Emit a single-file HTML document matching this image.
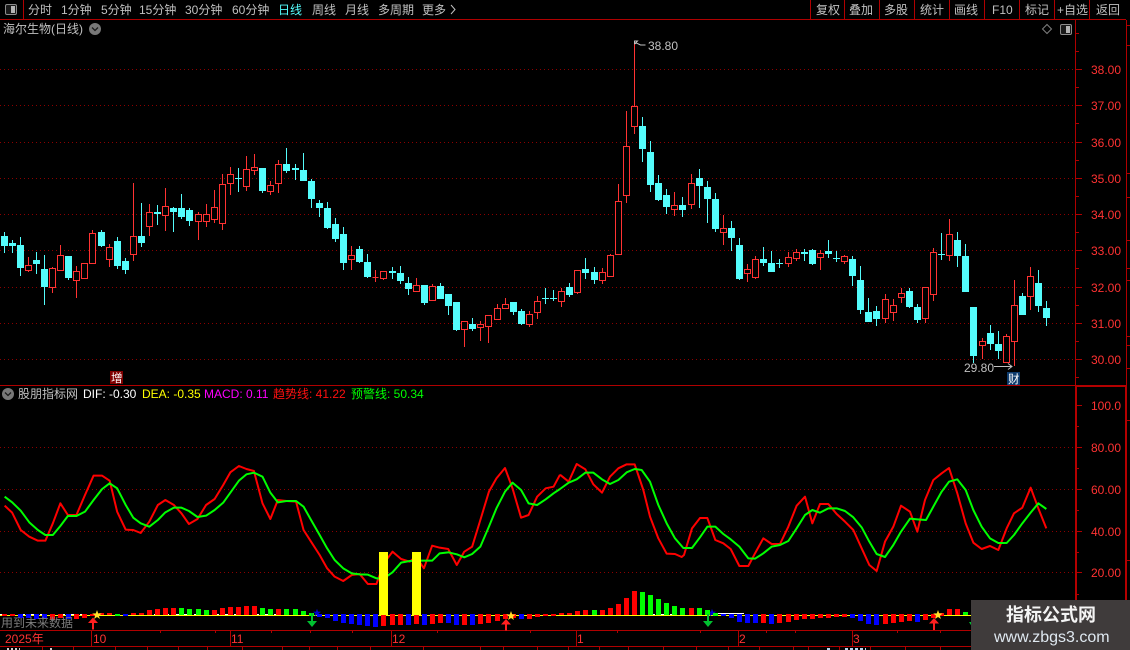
<!DOCTYPE html>
<html><head><meta charset="utf-8"><title>海尔生物</title>
<style>
html,body{margin:0;padding:0;background:#000;width:1130px;height:650px;overflow:hidden}
svg{display:block}
text{font-family:"Liberation Sans","WenQuanYi Zen Hei","Noto Sans CJK SC",sans-serif;font-size:12px}
.t text,.t{fill:#c0c0c0}
.a text{fill:#ff3232}
</style></head><body>
<svg width="1130" height="650" viewBox="0 0 1130 650" xmlns="http://www.w3.org/2000/svg">
<rect width="1130" height="650" fill="#000"/>
<!-- grid -->
<path d="M0 69.5H1075M0 105.5H1075M0 142.5H1075M0 178.5H1075M0 214.5H1075M0 250.5H1075M0 287.5H1075M0 323.5H1075M0 359.5H1075M0 447.5H1075M0 489.5H1075M0 531.5H1075M0 572.5H1075" stroke="#8c0000" stroke-width="1" stroke-dasharray="1 3" fill="none"/>
<!-- frame -->
<path d="M0 19.5H1126M23.5 0V19M810.5 0V19M844.5 0V19M879.5 0V19M914.5 0V19M949.5 0V19M984.5 0V19M1019.5 0V19M1054.5 0V19M1089.5 0V19M1075.5 20V386M1126.5 20V386M0 630.5H971M0 646.5H971" stroke="#b00000" stroke-width="1" fill="none"/>
<path d="M0 385.5H1075" stroke="#b00000" stroke-width="1"/>
<path d="M1075 386H1127M1076 386V630M1126 386V650" stroke="#b40000" stroke-width="2" fill="none"/>
<!-- axis ticks -->
<path d="M1076 69.5h6M1076 105.5h6M1076 142.5h6M1076 178.5h6M1076 214.5h6M1076 250.5h6M1076 287.5h6M1076 323.5h6M1076 359.5h6M1076 33.5h3M1076 51.5h3M1076 87.5h3M1076 123.5h3M1076 160.5h3M1076 196.5h3M1076 232.5h3M1076 268.5h3M1076 305.5h3M1076 341.5h3M1076 377.5h3M1077 405.5h5M1077 447.5h5M1077 489.5h5M1077 531.5h5M1077 572.5h5M1077 426.5h2M1077 468.5h2M1077 510.5h2M1077 552.5h2M1077 594.5h2M1127 25.5h3M1127 45.5h3M1127 173.5h3M1127 197.5h3M1127 240.5h3M1127 268.5h3M1127 280.5h3M1127 336.5h3M1127 345.5h3M1127 368.5h3M1127 420.5h3M1127 560.5h3" stroke="#b00000" stroke-width="1" fill="none"/>
<path d="M91.5 630V646M230.5 630V646M391.5 630V646M576.5 630V646M738.5 630V646M852.5 630V646M160.5 631v2M215.5 631v2M271.5 631v2M310.5 631v2M352.5 631v2M437.5 631v2M530.5 631v2M617.5 631v2M700.5 631v2M766.5 631v2M795.5 631v2M897.5 631v2M940.5 631v2M42.5 647v3M73.5 647v3M115.5 647v3M147.5 647v3M178.5 647v3M207.5 647v3M242.5 647v3M282.5 647v3M309.5 647v3M337.5 647v3M370.5 647v3M423.5 647v3M480.5 647v3M503.5 647v3M537.5 647v3M568.5 647v3M599.5 647v3M628.5 647v3M663.5 647v3M696.5 647v3M728.5 647v3M759.5 647v3M793.5 647v3M808.5 647v3M839.5 647v3M870.5 647v3M905.5 647v3M940.5 647v3" stroke="#b00000" stroke-width="1" fill="none"/>
<!-- cyan candles -->
<path d="M4.5 232V253M12.5 240V253M20.5 237V276M36.5 252V274M44.5 255V305M68.5 256V280M101.5 230V247M117.5 237V269M125.5 258V274M141.5 203V247M157.5 205V225M173.5 207V232M181.5 194V219M189.5 208V226M238.5 168V192M262.5 168V193M286.5 148V173M295.5 164V180M303.5 153V181M311.5 179V208M319.5 200V217M327.5 202V229M335.5 218V242M343.5 227V270M359.5 246V263M367.5 254V278M392.5 267V279M400.5 266V284M408.5 277V295M424.5 285V305M440.5 283V299M448.5 294V315M456.5 302V331M472.5 318V331M513.5 302V315M521.5 309V325M545.5 288V304M553.5 290V301M569.5 283V297M585.5 258V279M594.5 267V284M642.5 117V162M650.5 141V192M658.5 175V201M666.5 189V214M682.5 197V217M699.5 169V208M707.5 181V223M715.5 193V232M731.5 221V251M739.5 238V280M763.5 247V266M771.5 251V272M779.5 259V268M804.5 249V261M812.5 249V265M828.5 240V258M836.5 251V262M852.5 256V286M860.5 266V314M868.5 298V322M876.5 306V326M909.5 288V308M917.5 304V323M941.5 233V260M957.5 232V267M965.5 244V292M973.5 307V363M990.5 325V350M998.5 331V359M1022.5 293V315M1038.5 270V312M1046.5 301V326" stroke="#54fcfc" stroke-width="1" fill="none"/>
<path d="M1 236h7V246h-7zM9 243h7V246h-7zM17 245h7V268h-7zM33 260h7V264h-7zM41 269h7V287h-7zM65 256h7V278h-7zM98 232h7V246h-7zM114 241h7V266h-7zM122 261h7V270h-7zM138 236h7V243h-7zM154 212h7V214h-7zM170 208h7V212h-7zM178 208h7V217h-7zM186 210h7V221h-7zM235 178h7V179h-7zM259 168h7V191h-7zM283 164h7V171h-7zM292 168h7V170h-7zM300 170h7V181h-7zM308 181h7V199h-7zM316 203h7V208h-7zM324 208h7V228h-7zM332 224h7V239h-7zM340 234h7V263h-7zM356 249h7V262h-7zM364 262h7V277h-7zM389 271h7V273h-7zM397 273h7V281h-7zM405 283h7V289h-7zM421 285h7V303h-7zM437 286h7V299h-7zM445 294h7V306h-7zM453 302h7V330h-7zM469 324h7V329h-7zM510 302h7V312h-7zM518 311h7V324h-7zM542 298h7V299h-7zM550 298h7V299h-7zM566 287h7V295h-7zM582 269h7V273h-7zM591 272h7V280h-7zM639 126h7V149h-7zM647 152h7V185h-7zM655 183h7V200h-7zM663 195h7V207h-7zM679 205h7V210h-7zM696 178h7V186h-7zM704 187h7V199h-7zM712 199h7V229h-7zM728 228h7V238h-7zM736 245h7V279h-7zM760 259h7V263h-7zM768 263h7V272h-7zM776 263h7V264h-7zM801 252h7V254h-7zM809 250h7V264h-7zM825 251h7V254h-7zM833 258h7V259h-7zM849 259h7V276h-7zM857 280h7V310h-7zM865 312h7V322h-7zM873 311h7V319h-7zM906 291h7V307h-7zM914 307h7V320h-7zM938 254h7V255h-7zM954 240h7V256h-7zM962 256h7V292h-7zM970 307h7V356h-7zM987 333h7V344h-7zM995 344h7V351h-7zM1019 296h7V315h-7zM1035 283h7V306h-7zM1043 308h7V318h-7z" fill="#54fcfc"/>
<!-- red candles -->
<path d="M28.5 257V272M52.5 267V293M60.5 245V271M76.5 266V298M84.5 263V279M92.5 230V264M109.5 244V267M133.5 183V261M149.5 204V236M165.5 188V231M198.5 212V240M206.5 204V227M214.5 190V223M222.5 174V230M230.5 167V195M246.5 156V191M254.5 154V175M270.5 181V195M278.5 160V193M351.5 246V270M375.5 270V282M383.5 271V280M416.5 278V292M432.5 284V301M464.5 321V347M480.5 321V341M488.5 315V343M497.5 304V320M505.5 298V309M529.5 311V327M537.5 296V319M561.5 288V307M577.5 270V294M602.5 268V284M610.5 254V277M618.5 184V255M626.5 111V203M634.5 43V134M674.5 192V216M691.5 174V209M723.5 215V245M747.5 264V282M755.5 256V279M788.5 252V267M796.5 249V261M820.5 250V270M844.5 255V264M885.5 294V323M893.5 299V321M901.5 288V303M925.5 287V323M933.5 248V301M949.5 219V261M982.5 338V359M1006.5 334V363M1014.5 280V366M1030.5 267V310" stroke="#ff3232" stroke-width="1" fill="none"/>
<path d="M25.5 265.5h6V270.5h-6zM49.5 268.5h6V287.5h-6zM57.5 255.5h6V270.5h-6zM73.5 271.5h6V280.5h-6zM81.5 263.5h6V278.5h-6zM89.5 233.5h6V263.5h-6zM106.5 247.5h6V259.5h-6zM130.5 236.5h6V254.5h-6zM146.5 212.5h6V226.5h-6zM162.5 206.5h6V215.5h-6zM195.5 214.5h6V221.5h-6zM203.5 214.5h6V221.5h-6zM211.5 207.5h6V219.5h-6zM219.5 184.5h6V223.5h-6zM227.5 174.5h6V183.5h-6zM243.5 169.5h6V186.5h-6zM251.5 167.5h6V170.5h-6zM267.5 185.5h6V191.5h-6zM275.5 164.5h6V183.5h-6zM348.5 255.5h6V259.5h-6zM372.5 277.5h6V277.5h-6zM380.5 271.5h6V278.5h-6zM413.5 285.5h6V291.5h-6zM429.5 286.5h6V300.5h-6zM461.5 321.5h6V329.5h-6zM477.5 324.5h6V327.5h-6zM485.5 315.5h6V326.5h-6zM494.5 308.5h6V319.5h-6zM502.5 304.5h6V308.5h-6zM526.5 314.5h6V324.5h-6zM534.5 301.5h6V312.5h-6zM558.5 291.5h6V301.5h-6zM574.5 270.5h6V292.5h-6zM599.5 272.5h6V280.5h-6zM607.5 255.5h6V276.5h-6zM615.5 201.5h6V254.5h-6zM623.5 146.5h6V195.5h-6zM631.5 106.5h6V126.5h-6zM671.5 205.5h6V209.5h-6zM688.5 183.5h6V204.5h-6zM720.5 228.5h6V232.5h-6zM744.5 269.5h6V273.5h-6zM752.5 259.5h6V277.5h-6zM785.5 257.5h6V263.5h-6zM793.5 252.5h6V258.5h-6zM817.5 253.5h6V257.5h-6zM841.5 256.5h6V261.5h-6zM882.5 299.5h6V318.5h-6zM890.5 305.5h6V312.5h-6zM898.5 293.5h6V297.5h-6zM922.5 287.5h6V318.5h-6zM930.5 252.5h6V294.5h-6zM946.5 234.5h6V255.5h-6zM979.5 341.5h6V345.5h-6zM1003.5 336.5h6V362.5h-6zM1011.5 305.5h6V341.5h-6zM1027.5 276.5h6V296.5h-6z" fill="#000" stroke="#ff3232" stroke-width="1"/>
<!-- high/low markers -->
<path d="M634.5 44V41h3l-3 3 2-1 4 2 5 0" stroke="#c0c0c0" fill="none" stroke-width="1"/>
<text x="648" y="50" fill="#c0c0c0">38.80</text>
<path d="M994 366.5h18M1008 363.5l4 3-4 3" stroke="#c0c0c0" fill="none" stroke-width="1"/>
<text x="964" y="372" fill="#c0c0c0">29.80</text>
<rect x="110" y="371" width="13" height="13" fill="#800000"/><text x="111" y="382" fill="#fff" style="font-size:11.5px">增</text>
<rect x="1007" y="372" width="13" height="13" fill="#0c3a6c"/><text x="1008" y="383" fill="#fff" style="font-size:11.5px">财</text>
<!-- indicator lines -->
<g fill="none" stroke-width="2" stroke-linejoin="round">
<polyline vector-effect="non-scaling-stroke" stroke="#ff0000" transform="translate(0 440) scale(.35714 .33333)" points="13,197 34,218 58,270 82,290 106,302 127,302 148,250 169,190 190,225 214,225 238,165 262,107 286,107 307,122 328,215 352,269 373,270 394,279 418,245 442,195 463,180 487,195 508,220 529,252 553,237 577,195 601,177 625,135 645,97 669,78 690,87 711,93 735,190 757,237 778,180 802,183 829,185 850,270 871,305 895,345 916,385 937,410 961,423 985,405 1007,402 1030,432 1054,432 1075,370 1099,335 1123,357 1147,365 1165,350 1187,385 1210,317 1231,323 1255,327 1279,375 1300,335 1322,320 1345,240 1369,155 1390,115 1414,84 1435,145 1459,233 1480,225 1504,170 1528,145 1550,140 1568,104"/>
<polyline vector-effect="non-scaling-stroke" stroke="#ff0000" transform="translate(560 440) scale(.33333)" points="0,104 26,125 50,72 76,88 100,133 126,158 150,110 175,85 200,73 224,73 250,150 270,230 295,295 320,341 345,342 365,351 372,345 396,265 420,234 442,234 466,300 490,310 512,327 538,378 565,378 585,340 610,295 635,312 660,312 685,260 710,197 735,170 757,250 780,192 805,192 830,222 855,245 880,270 905,325 928,375 950,393 975,305 1000,260 1023,197 1050,215 1072,275 1095,180 1120,120 1145,100 1167,84 1192,160 1217,250 1240,308 1265,327 1290,318 1315,330 1340,265 1362,220 1387,203 1412,143 1435,205 1459,265"/>
<polyline vector-effect="non-scaling-stroke" stroke="#00ff00" transform="translate(0 440) scale(.35714 .33333)" points="13,170 34,187 58,212 82,247 106,270 127,285 148,285 169,258 190,228 214,228 238,215 262,180 286,147 307,130 328,145 352,195 373,233 394,250 418,260 442,240 463,217 487,203 508,203 529,213 553,231 577,227 601,210 625,188 645,158 669,122 690,103 711,98 735,110 757,158 778,187 802,183 829,183 850,200 871,240 895,285 916,325 937,360 961,385 985,400 1007,403 1030,404 1054,415 1075,415 1099,397 1123,368 1147,363 1165,362 1187,362 1210,362 1231,340 1255,337 1279,343 1300,352 1322,342 1345,320 1369,260 1390,205 1414,155 1435,128 1459,150 1480,190 1504,195 1528,178 1550,160 1568,147"/>
<polyline vector-effect="non-scaling-stroke" stroke="#00ff00" transform="translate(560 440) scale(.33333)" points="0,147 26,128 50,118 76,98 100,98 126,118 150,132 175,120 200,97 224,87 245,90 270,125 295,195 320,250 345,295 370,324 396,324 420,292 442,260 466,260 490,282 512,298 538,320 565,355 585,356 610,340 635,320 660,315 685,303 710,265 735,225 757,210 780,218 805,205 830,205 855,213 880,232 905,262 928,305 950,342 975,351 1000,315 1023,275 1050,236 1072,238 1098,240 1120,200 1145,155 1167,125 1192,118 1217,150 1240,210 1265,260 1290,295 1315,309 1340,309 1362,285 1387,250 1412,218 1435,190 1459,207"/>
</g>
<!-- zero line -->
<path d="M0 615.5H971" stroke="#ffff00" stroke-width="1"/>
<path d="M0 614.5H90M154 614.5H290M650 614.5H680" stroke="#fff" stroke-width="1" stroke-dasharray="5 5"/>
<path d="M713 613.5H744" stroke="#fff" stroke-width="1"/>
<!-- blue outline stars -->
<polygon transform="translate(317 613) scale(.85)" points="0,-5 1.2,-1.6 4.8,-1.5 1.9,.6 2.9,4 0,2 -2.9,4 -1.9,.6 -4.8,-1.5 -1.2,-1.6" fill="#0000d0"/>
<polygon transform="translate(712 613) scale(.85)" points="0,-5 1.2,-1.6 4.8,-1.5 1.9,.6 2.9,4 0,2 -2.9,4 -1.9,.6 -4.8,-1.5 -1.2,-1.6" fill="#0000d0"/>
<!-- MACD bars -->
<path fill="#ff0000" d="M2 614h5v2h-5zM10 614h5v2h-5zM50 614h5v6h-5zM58 614h5v4h-5zM74 614h5v5h-5zM82 614h5v4h-5zM90 614h5v2h-5zM99 613h5v2h-5zM107 613h5v2h-5zM131 613h5v2h-5zM139 613h5v2h-5zM147 610h5v5h-5zM155 609h5v6h-5zM163 608h5v7h-5zM171 608h5v7h-5zM212 610h5v5h-5zM220 608h5v7h-5zM228 607h5v8h-5zM236 607h5v8h-5zM244 606h5v9h-5zM252 606h5v9h-5zM276 609h5v6h-5zM381 615h5v11h-5zM390 614h5v11h-5zM398 614h5v11h-5zM414 615h5v9h-5zM430 614h5v10h-5zM438 614h5v9h-5zM462 614h5v11h-5zM478 614h5v10h-5zM486 614h5v9h-5zM495 614h5v7h-5zM503 614h5v5h-5zM511 614h5v4h-5zM527 614h5v5h-5zM535 614h5v3h-5zM543 614h5v2h-5zM551 614h5v2h-5zM559 613h5v2h-5zM567 613h5v2h-5zM575 611h5v4h-5zM583 610h5v5h-5zM600 610h5v5h-5zM608 608h5v7h-5zM616 604h5v11h-5zM624 598h5v17h-5zM632 591h5v24h-5zM689 608h5v7h-5zM761 614h5v9h-5zM777 614h5v9h-5zM786 614h5v8h-5zM794 614h5v6h-5zM802 614h5v5h-5zM810 614h5v5h-5zM818 614h5v4h-5zM826 614h5v4h-5zM834 614h5v3h-5zM842 614h5v3h-5zM883 614h5v10h-5zM891 614h5v9h-5zM899 614h5v8h-5zM907 614h5v7h-5zM923 614h5v6h-5zM931 614h5v4h-5zM939 613h5v3h-5zM947 609h5v6h-5zM955 609h5v6h-5z"/>
<path fill="#0000ff" d="M18 614h5v4h-5zM26 614h5v4h-5zM34 614h5v5h-5zM42 614h5v5h-5zM66 614h5v5h-5zM123 614h5v2h-5zM317 614h5v3h-5zM325 614h5v4h-5zM333 614h5v7h-5zM341 614h5v9h-5zM349 614h5v10h-5zM357 614h5v11h-5zM365 614h5v12h-5zM373 614h5v13h-5zM406 614h5v11h-5zM422 614h5v11h-5zM446 614h5v9h-5zM454 614h5v11h-5zM470 614h5v11h-5zM519 614h5v5h-5zM721 614h5v2h-5zM729 614h5v4h-5zM737 614h5v8h-5zM745 614h5v9h-5zM753 614h5v9h-5zM769 614h5v10h-5zM850 614h5v4h-5zM858 614h5v7h-5zM866 614h5v10h-5zM874 614h5v11h-5zM915 614h5v8h-5z"/>
<path fill="#00ff00" d="M115 614h5v2h-5zM179 608h5v7h-5zM187 609h5v6h-5zM196 609h5v6h-5zM204 610h5v5h-5zM260 608h5v7h-5zM268 609h5v6h-5zM284 609h5v6h-5zM293 609h5v6h-5zM301 611h5v4h-5zM309 613h5v3h-5zM592 610h5v5h-5zM640 592h5v23h-5zM648 595h5v20h-5zM656 599h5v16h-5zM664 603h5v12h-5zM672 606h5v9h-5zM680 608h5v7h-5zM697 608h5v7h-5zM705 610h5v5h-5zM713 613h5v3h-5zM963 612h5v3h-5z"/>
<!-- yellow bars -->
<rect x="379" y="552" width="9" height="63" fill="#ffff00"/>
<rect x="412" y="552" width="9" height="63" fill="#ffff00"/>
<!-- arrows and stars -->
<path fill="#ff2020" d="M93 617.5l5 5.5h-4v6.5h-2V623h-4zM506 619l5 5.5h-4v6h-2v-6h-4zM934 618l5 5.5h-4v6.5h-2v-6.5h-4z"/>
<path fill="#00c030" d="M311 613h2v8h4l-5 6-5-6h4zM707 614h2v7h4l-5 6-5-6h4zM969 622h5l-2.500 4z"/>
<g fill="#ffe028"><polygon transform="translate(97 615)" points="0,-5 1.2,-1.6 4.8,-1.5 1.9,.6 2.900,4 0,2 -2.900,4 -1.900,.6 -4.800,-1.500 -1.200,-1.600"/><polygon transform="translate(511 616)" points="0,-5 1.2,-1.6 4.8,-1.5 1.9,.6 2.900,4 0,2 -2.900,4 -1.900,.6 -4.800,-1.500 -1.200,-1.600"/><polygon transform="translate(938 615)" points="0,-5 1.2,-1.6 4.8,-1.5 1.9,.6 2.900,4 0,2 -2.900,4 -1.900,.6 -4.800,-1.500 -1.200,-1.600"/></g>
<!-- toolbar icons -->
<rect x="5.500" y="4.500" width="11" height="10" rx="1.500" fill="#1a1a1a" stroke="#8c8c8c"/><rect x="11" y="6" width="4" height="7" fill="#b4b4b4"/>
<path d="M1047 24.500l4.500 4.500-4.500 4.500-4.500-4.500z" fill="none" stroke="#808080"/>
<rect x="1060.500" y="24.500" width="11" height="10" rx="1.500" fill="#1a1a1a" stroke="#8c8c8c"/><rect x="1066" y="26" width="4" height="7" fill="#b4b4b4"/>
<circle cx="95" cy="29" r="6" fill="#787878"/><path d="M92 27.500l3 3 3-3" stroke="#1c1c1c" stroke-width="1.300" fill="none"/>
<circle cx="8" cy="394" r="6" fill="#787878"/><path d="M5 392.500l3 3 3-3" stroke="#1c1c1c" stroke-width="1.300" fill="none"/>
<!-- toolbar text -->
<g class="t">
<text x="28" y="14">分时</text><text x="61" y="14">1分钟</text><text x="101" y="14">5分钟</text><text x="139" y="14">15分钟</text><text x="185" y="14">30分钟</text><text x="232" y="14">60分钟</text>
<text x="278" y="14" style="fill:#54fcfc">日线</text>
<text x="312" y="14">周线</text><text x="345" y="14">月线</text><text x="378" y="14">多周期</text><text x="422" y="14">更多</text>
<path d="M451 5l4 4.500-4 4.500" fill="none" stroke="#c0c0c0"/>
<text x="816" y="14">复权</text><text x="849" y="14">叠加</text><text x="884" y="14">多股</text><text x="920" y="14">统计</text><text x="954" y="14">画线</text><text x="992" y="14">F10</text><text x="1025" y="14">标记</text><text x="1057" y="14">+自选</text><text x="1096" y="14">返回</text>
<text x="3" y="33">海尔生物(日线)</text>
<text x="18" y="398">股朋指标网</text>
</g>
<text x="83" y="398" fill="#fff">DIF: -0.30</text>
<text x="142" y="398" fill="#ffff00">DEA: -0.35</text>
<text x="204" y="398" fill="#ff00ff">MACD: 0.11</text>
<text x="273" y="398" fill="#ff1010">趋势线: 41.22</text>
<text x="351" y="398" fill="#00ff00">预警线: 50.34</text>
<text x="1" y="627" fill="#7c7c7c">用到未来数据</text>
<!-- axis text -->
<g class="a">
<text x="1091" y="74">38.00</text><text x="1091" y="110">37.00</text><text x="1091" y="147">36.00</text><text x="1091" y="183">35.00</text><text x="1091" y="219">34.00</text><text x="1091" y="255">33.00</text><text x="1091" y="292">32.00</text><text x="1091" y="328">31.00</text><text x="1091" y="364">30.00</text>
<text x="1091" y="410">100.0</text><text x="1091" y="452">80.00</text><text x="1091" y="494">60.00</text><text x="1091" y="536">40.00</text><text x="1091" y="577">20.00</text>
<text x="5" y="643">2025年</text><text x="93" y="643">10</text><text x="231" y="643">11</text><text x="392" y="643">12</text><text x="577" y="643">1</text><text x="739" y="643">2</text><text x="853" y="643">3</text>
</g>
<!-- bottom remnants -->
<path d="M7 649h13M50 649h3" stroke="#d0d0d0" stroke-width="2" stroke-dasharray="2 2"/>
<path d="M827 649h3M845 649h21" stroke="#b8d8f0" stroke-width="2" stroke-dasharray="3 2"/>
<!-- watermark -->
<rect x="971" y="600" width="159" height="50" fill="#3f3b3b"/>
<text x="1006" y="621" fill="#f4f4f4" style="font-family:'Noto Sans CJK SC','WenQuanYi Zen Hei',sans-serif;font-size:18px;font-weight:700">指标公式网</text>
<text x="994" y="642" fill="#dfe8f0" style="font-size:16px">www.zbgs3.com</text>
</svg>
</body></html>
